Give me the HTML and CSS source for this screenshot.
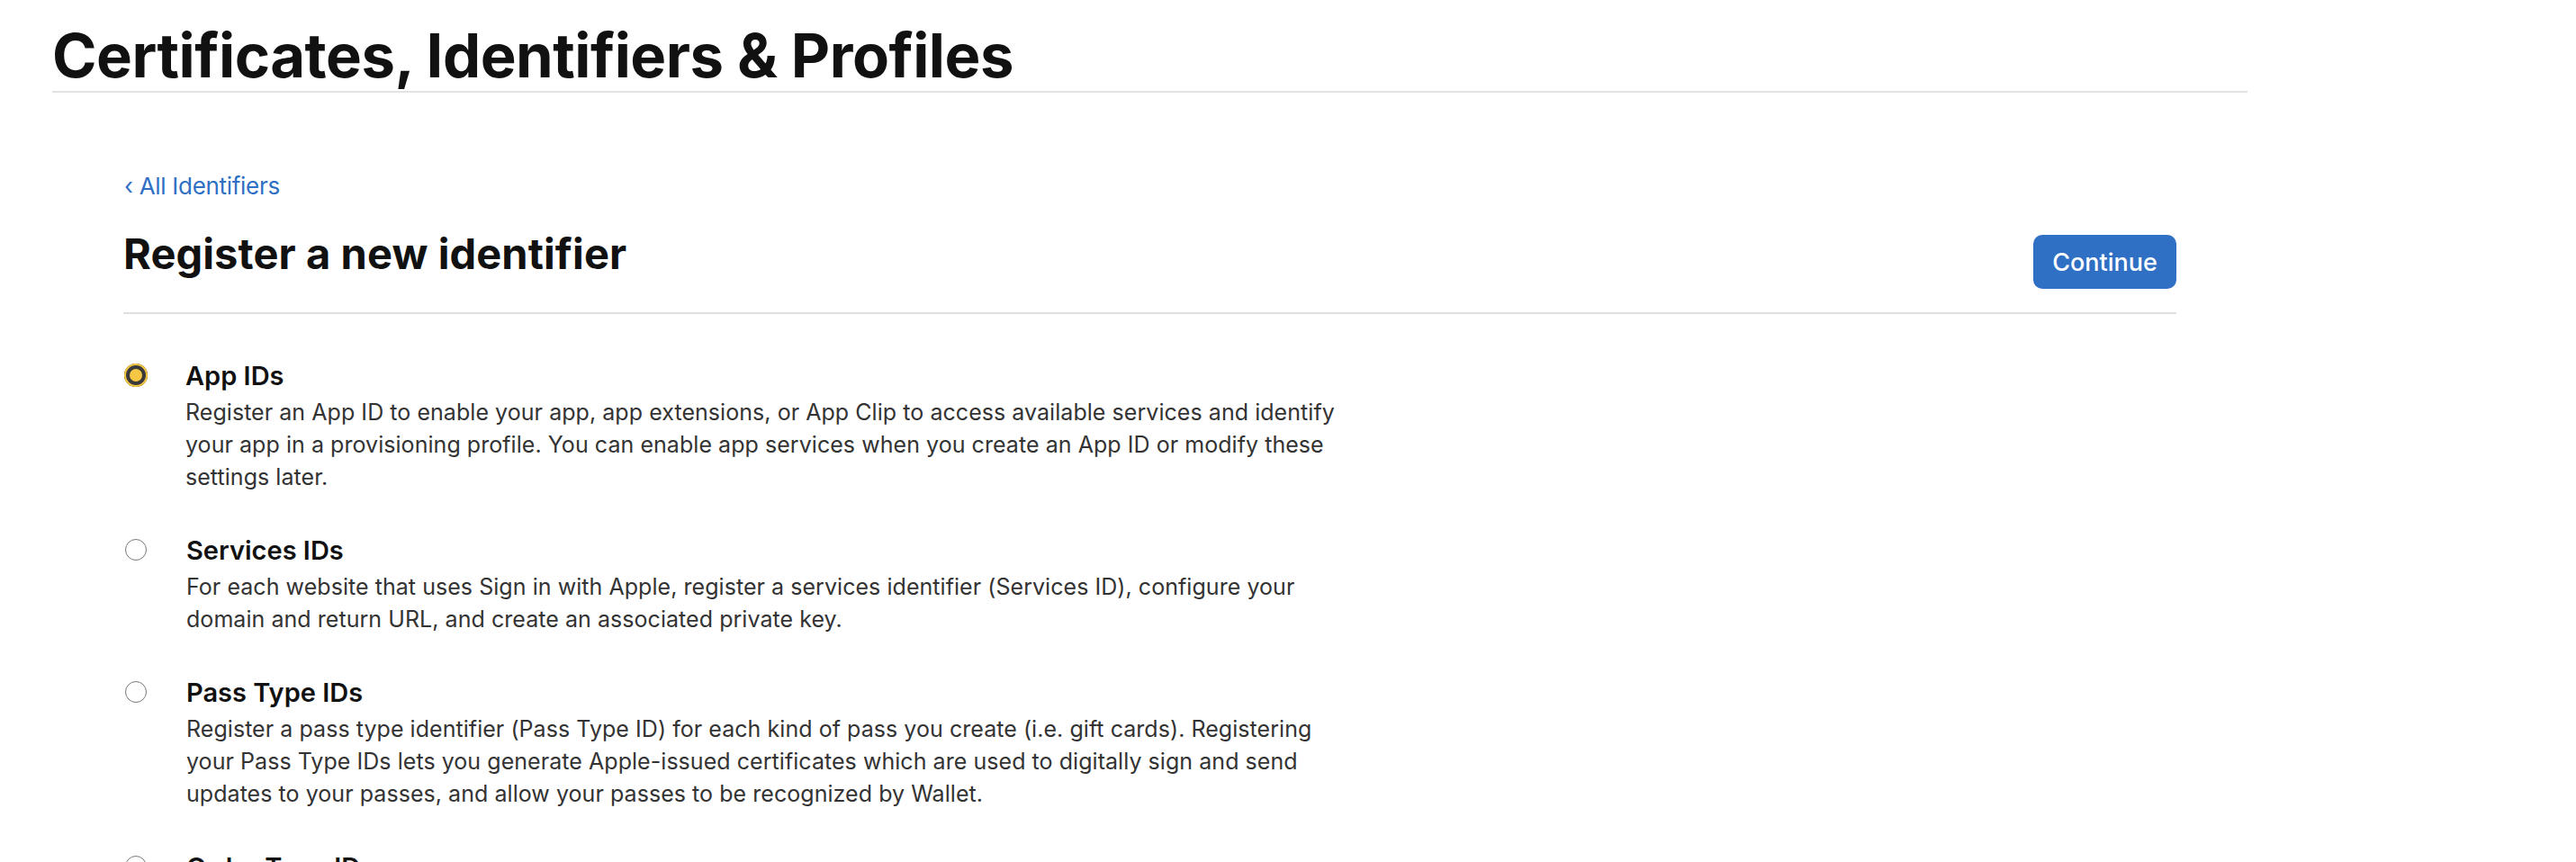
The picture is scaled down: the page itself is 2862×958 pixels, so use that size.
FILE: index.html
```html
<!DOCTYPE html>
<html lang="en">
<head>
<meta charset="utf-8">
<title>Certificates, Identifiers &amp; Profiles</title>
<link rel="stylesheet" href="styles.css">
</head>
<body>
  <header class="site-header">
    <h1 class="site-title">Certificates, Identifiers &amp; Profiles</h1>
  </header>

  <main class="content">
    <a class="back-link" href="#"><span class="back-chevron">‹</span> All Identifiers</a>

    <div class="page-head">
      <h2 class="page-title">Register a new identifier</h2>
      <button class="btn-primary" type="button">Continue</button>
    </div>

    <ul class="options">
      <li class="option">
        <span class="radio radio-checked"></span>
        <div class="option-body">
          <div class="option-title">App IDs</div>
          <p class="option-desc">Register an App ID to enable your app, app extensions, or App Clip to access available services and identify<br>your app in a provisioning profile. You can enable app services when you create an App ID or modify these<br>settings later.</p>
        </div>
      </li>
      <li class="option">
        <span class="radio"></span>
        <div class="option-body">
          <div class="option-title">Services IDs</div>
          <p class="option-desc">For each website that uses Sign in with Apple, register a services identifier (Services ID), configure your<br>domain and return URL, and create an associated private key.</p>
        </div>
      </li>
      <li class="option">
        <span class="radio"></span>
        <div class="option-body">
          <div class="option-title">Pass Type IDs</div>
          <p class="option-desc">Register a pass type identifier (Pass Type ID) for each kind of pass you create (i.e. gift cards). Registering<br>your Pass Type IDs lets you generate Apple-issued certificates which are used to digitally sign and send<br>updates to your passes, and allow your passes to be recognized by Wallet.</p>
        </div>
      </li>
      <li class="option">
        <span class="radio"></span>
        <div class="option-body">
          <div class="option-title">Order Type IDs</div>
          <p class="option-desc">Register an order type identifier (Order Type ID) for each type of order you create. Registering<br>your Order Type IDs lets you generate certificates used to sign and send updates to your orders.</p>
        </div>
      </li>
    </ul>
  </main>
</body>
</html>
```

FILE: styles.css
```css
* { box-sizing: border-box; }

html, body {
  margin: 0;
  padding: 0;
  background: #ffffff;
  font-family: "Inter", "Helvetica Neue", "Liberation Sans", sans-serif;
  color: #1d1d1f;
}

.site-header {
  margin: 0 365px 0 58px;
  padding-top: 29px;
  padding-bottom: 6px;
  border-bottom: 2px solid #e3e3e3;
}

.site-title {
  margin: 0;
  font-size: 67px;
  line-height: 66px;
  font-weight: 700;
  color: #111111;
  letter-spacing: -0.5px;
}

.content {
  margin-left: 137px;
  width: 2281px;
  padding-top: 86px;
}

.back-link {
  display: block;
  font-size: 26px;
  line-height: 36px;
  color: #2f6fc4;
  text-decoration: none;
  letter-spacing: -0.3px;
}

.back-chevron {
  display: inline-block;
  margin-left: 1px;
}

.page-head {
  display: flex;
  justify-content: space-between;
  align-items: flex-start;
  margin-top: 29px;
  padding-bottom: 26px;
  border-bottom: 2px solid #e0e0e0;
}

.page-title {
  margin: 0;
  font-size: 47px;
  line-height: 56px;
  font-weight: 700;
  color: #111111;
  letter-spacing: 0.1px;
}

.btn-primary {
  margin-top: 7px;
  width: 159px;
  height: 60px;
  border: 0;
  border-radius: 10px;
  background: #2f6fc4;
  color: #ffffff;
  font-family: inherit;
  font-size: 27px;
  font-weight: 500;
  padding: 0;
}

.options {
  list-style: none;
  margin: 0;
  padding: 49px 0 0 0;
  display: flex;
  flex-direction: column;
  gap: 44px;
}

.option {
  display: flex;
  align-items: flex-start;
}

.radio {
  flex: none;
  width: 24px;
  height: 24px;
  margin: 7px 44px 0 2px;
  border-radius: 50%;
  border: 1.5px solid #777777;
  background: #ffffff;
}

.radio-checked {
  width: 26px;
  height: 26px;
  margin: 6px 42px 0 1px;
  border: 0;
  background: #f6c744;
  box-shadow: inset 0 0 0 2px #f6c744, inset 0 0 0 6px #3a3a3a;
}

.option-body {
  flex: 1;
}

.option-title {
  font-size: 29px;
  line-height: 40px;
  font-weight: 600;
  color: #111111;
}

.option-desc {
  margin: 2px 0 0 0;
  font-size: 25px;
  line-height: 36px;
  color: #333333;
  letter-spacing: 0.05px;
  white-space: nowrap;
}
```
